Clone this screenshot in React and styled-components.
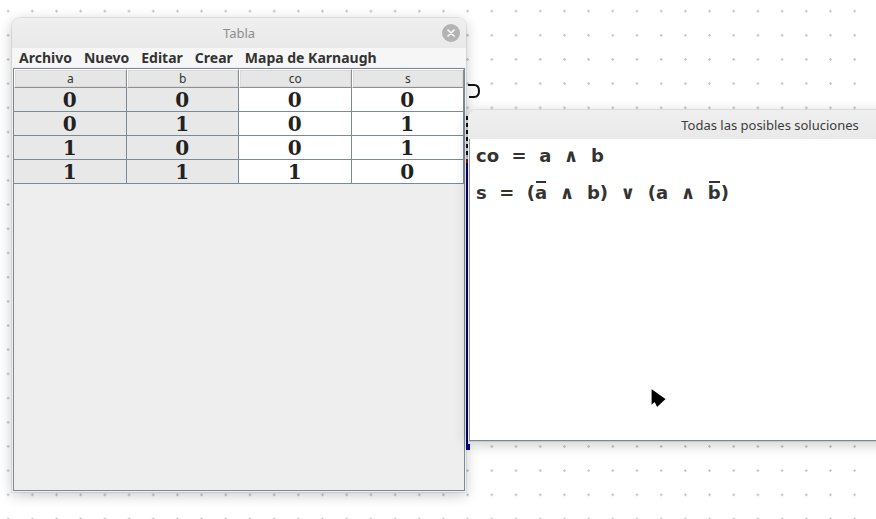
import styled, { createGlobalStyle } from "styled-components";

const GlobalStyle = createGlobalStyle`
  html, body {
    margin: 0;
    padding: 0;
  }
  body {
    width: 876px;
    height: 519px;
    overflow: hidden;
    background: #fff;
    font-family: "Noto Sans", "Open Sans", sans-serif;
  }
`;

const Desktop = styled.div`
  position: relative;
  width: 876px;
  height: 519px;
  overflow: hidden;
  background-color: #fff;
  background-image: radial-gradient(circle, #c4c4c4 1px, transparent 1.4px);
  background-size: 24.2px 24.2px;
  background-position: -4px -1px;
`;

const Window = styled.div`
  position: absolute;
  left: ${(p) => p.$x}px;
  top: ${(p) => p.$y}px;
  width: ${(p) => p.$w}px;
  height: ${(p) => p.$h}px;
  display: flex;
  flex-direction: column;
  border-radius: 8px 8px 0 0;
  background: #eeeeee;
  box-shadow: 0 3px 14px rgba(0, 0, 0, 0.22), 0 0 0 1px rgba(0, 0, 0, 0.07);
`;

const TitleBar = styled.div`
  position: relative;
  height: ${(p) => p.$h}px;
  flex: none;
  display: flex;
  align-items: center;
  justify-content: center;
  border-radius: 8px 8px 0 0;
  background: linear-gradient(#efefef, #e9e9e9);
  font-size: 13px;
  color: ${(p) => p.$color};
`;

const CloseButton = styled.div`
  position: absolute;
  right: 6px;
  top: 6px;
  width: 18px;
  height: 18px;
  border-radius: 50%;
  background: #b3b3b3;
  display: flex;
  align-items: center;
  justify-content: center;
`;

const MenuBar = styled.div`
  height: 19px;
  flex: none;
  display: flex;
  align-items: center;
  gap: 12px;
  padding-left: 7px;
  background: #f6f6f6;
  font-size: 14px;
  font-weight: 700;
  color: #333;
  line-height: 1;
`;

const TablePane = styled.div`
  flex: 1;
  margin: 1px;
  border: 1px solid #7d8995;
  background: #eeeeee;
`;

const Grid = styled.div`
  display: grid;
  grid-template-columns: repeat(4, 1fr);
`;

const HeaderCell = styled.div`
  height: 19px;
  box-sizing: border-box;
  display: flex;
  align-items: center;
  justify-content: center;
  background: #e6e6e6;
  border: 1px solid #8f8f8f;
  border-left-color: #fff;
  border-top-color: #fff;
  box-shadow: inset 0 0 0 1px #dadada;
  font-size: 12px;
  color: #333;
`;

const Cell = styled.div`
  height: 24px;
  box-sizing: border-box;
  display: flex;
  align-items: center;
  justify-content: center;
  background: ${(p) => (p.$input ? "#e8e8e8" : "#ffffff")};
  border-right: 1px solid #7b8a99;
  border-bottom: 1px solid #7b8a99;
  font-family: "DejaVu Serif", "Liberation Serif", serif;
  font-weight: 700;
  font-size: 20px;
  color: #222;
`;

const SolutionPane = styled.div`
  flex: 1;
  background: #fff;
  border-left: 1px solid #8b97a3;
  border-bottom: 1px solid #7b8894;
  margin-left: 1px;
  padding: 0 6px;
  font-family: "DejaVu Sans", "Noto Sans", sans-serif;
  font-weight: 700;
  font-size: 18px;
  color: #333;
  line-height: 37px;
`;

const Formula = styled.div`
  white-space: pre;
  margin-top: ${(p) => p.$shift || 0}px;
`;

const Neg = styled.span`
  position: relative;
  &::after {
    content: "";
    position: absolute;
    left: 1px;
    right: 1px;
    top: -1px;
    height: 2px;
    background: #333;
  }
`;

const Sliver = styled.div`
  position: absolute;
  left: 466px;
  top: 116px;
  width: 2px;
  height: 334px;
  display: flex;
  flex-direction: column;
`;

const Dashes = styled.div`
  height: 40px;
  background: repeating-linear-gradient(#111 0 4px, transparent 4px 7px);
`;

const BlueLine = styled.div`
  flex: 1;
  margin-top: 3px;
  background: linear-gradient(#a01010 0 4px, #000088 4px);
`;

const BlueTip = styled.div`
  height: 6px;
  width: 4px;
  background: #00008c;
`;

const Overlay = styled.svg`
  position: absolute;
  left: ${(p) => p.$x}px;
  top: ${(p) => p.$y}px;
`;

const header = ["a", "b", "co", "s"];
const rows = [
  [0, 0, 0, 0],
  [0, 1, 0, 1],
  [1, 0, 0, 1],
  [1, 1, 1, 0],
];

export default function App() {
  return (
    <Desktop>
      <GlobalStyle />

      <Overlay $x={464} $y={80} width="20" height="22" viewBox="0 0 20 22">
        <path d="M4 5 H10 Q15 5 15 11 Q15 17 10 17 H5" fill="none" stroke="#111" strokeWidth="2" />
      </Overlay>

      <Sliver>
        <Dashes />
        <BlueLine />
        <BlueTip />
      </Sliver>

      <Window $x={12} $y={18} $w={454} $h={474}>
        <TitleBar $h={30} $color="#8c8c8c">
          Tabla
          <CloseButton>
            <svg width="10" height="10" viewBox="0 0 10 10">
              <path d="M2 2 L8 8 M8 2 L2 8" stroke="#fff" strokeWidth="1.6" strokeLinecap="round" />
            </svg>
          </CloseButton>
        </TitleBar>
        <MenuBar>
          <span>Archivo</span>
          <span>Nuevo</span>
          <span>Editar</span>
          <span>Crear</span>
          <span>Mapa de Karnaugh</span>
        </MenuBar>
        <TablePane>
          <Grid>
            {header.map((h) => (
              <HeaderCell key={h}>{h}</HeaderCell>
            ))}
            {rows.map((r, i) =>
              r.map((v, j) => (
                <Cell key={`${i}-${j}`} $input={j < 2}>
                  {v}
                </Cell>
              ))
            )}
          </Grid>
        </TablePane>
      </Window>

      <Window $x={468} $y={110} $w={604} $h={331}>
        <TitleBar $h={29} $color="#3c3c3c">
          Todas las posibles soluciones
        </TitleBar>
        <SolutionPane>
          <Formula $shift={-2}>{"co  =  a  ∧  b"}</Formula>
          <Formula>
            {"s  =  ("}
            <Neg>a</Neg>
            {"  ∧  b)  ∨  (a  ∧  "}
            <Neg>b</Neg>
            {")"}
          </Formula>
        </SolutionPane>
      </Window>

      <Overlay $x={648} $y={386} width="22" height="26" viewBox="0 0 22 26">
        <path d="M3 2 L3 20 L6.5 17 L9 22 L18.5 13 Z" fill="#000" stroke="#fff" strokeWidth="1.2" strokeLinejoin="round" />
      </Overlay>
    </Desktop>
  );
}
